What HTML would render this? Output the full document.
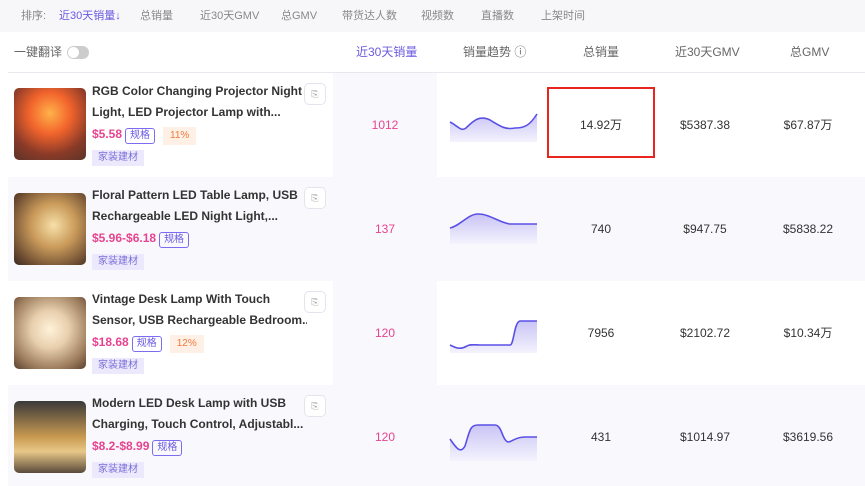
<!DOCTYPE html>
<html><head><meta charset="utf-8"><style>
*{margin:0;padding:0;box-sizing:border-box}
body{width:865px;height:486px;overflow:hidden;background:#fff;font-family:"Liberation Sans","Noto Sans CJK SC",sans-serif;position:relative;color:#333}
.a{position:absolute}
.sort{left:0;top:0;width:865px;height:32px;background:#f7f7fa;font-size:11px;color:#888}
.sort span{position:absolute;top:9px;line-height:14px}
.hd{font-size:12px;color:#666;top:44px;line-height:16px}
.row{left:8px;width:857px;height:104px}
.img{width:72px;height:72px;border-radius:5px;left:14px}
.t{left:92px;font-size:12px;font-weight:bold;color:#333;line-height:21px;width:215px;white-space:nowrap;overflow:hidden}
.p{font-size:12px;font-weight:bold;color:#e8438f}
.tag{display:inline-block;border:1px solid #7b6cf0;color:#6a5ae0;font-size:10px;border-radius:3px;padding:0 4px;line-height:14px;margin-left:3px;font-weight:normal}
.pct{display:inline-block;background:#fff0e6;color:#f07a3c;font-size:10px;padding:0 7px;line-height:18px;margin-left:8px;font-weight:normal}
.cat{left:92px;background:#ebe9fb;color:#7a6fd8;font-size:10px;padding:0 6px;line-height:16px}
.tr{left:304px;width:22px;height:22px;border:1px solid #e4e4ee;border-radius:5px;background:#fff;font-size:9px;color:#999;text-align:center;line-height:20px}
.n{font-size:12px;color:#333;text-align:center;line-height:16px;height:16px;white-space:nowrap}
.pk{color:#e8438f}
</style></head><body>
<div class="a sort"><span style="left:21px">排序:</span><span style="left:59px;color:#6a5ae0">近30天销量↓</span><span style="left:140px">总销量</span><span style="left:200px">近30天GMV</span><span style="left:281px">总GMV</span><span style="left:342px">带货达人数</span><span style="left:421px">视频数</span><span style="left:481px">直播数</span><span style="left:541px">上架时间</span></div>
<div class="a hd" style="left:14px">一键翻译</div>
<div class="a" style="left:67px;top:46px;width:22px;height:13px;border-radius:7px;background:#ccc"><div style="position:absolute;left:1px;top:1px;width:11px;height:11px;border-radius:50%;background:#fff"></div></div>
<div class="a hd" style="left:356px;color:#6a5ae0">近30天销量</div>
<div class="a hd" style="left:463px">销量趋势 ⓘ</div>
<div class="a hd" style="left:583px">总销量</div>
<div class="a hd" style="left:675px">近30天GMV</div>
<div class="a hd" style="left:790px">总GMV</div>
<div class="a" style="left:8px;top:72px;width:857px;height:1px;background:#e8e8ee"></div>

<div class="a row" style="top:73px;background:#fff"></div>
<div class="a" style="left:333px;top:73px;width:104px;height:104px;background:#f9f9fd"></div>
<div class="a row" style="top:177px;background:#f9f9fd"></div>
<div class="a row" style="top:281px;background:#fff"></div>
<div class="a" style="left:333px;top:281px;width:104px;height:104px;background:#f9f9fd"></div>
<div class="a row" style="top:385px;background:#f9f9fd;height:101px"></div>

<svg class="a" style="left:0;top:0" width="865" height="486">
<defs><linearGradient id="g" x1="0" y1="0" x2="0" y2="1"><stop offset="0" stop-color="#c9c4f5"/><stop offset="1" stop-color="#f4f3fd"/></linearGradient></defs>
<path d="M450 122 C458 126,461 132,466 128 C474 120,480 115,490 120 C500 126,505 130,515 128 C525 128,530 125,537 114 L537 142 L450 142Z" fill="url(#g)"/>
<path d="M450 122 C458 126,461 132,466 128 C474 120,480 115,490 120 C500 126,505 130,515 128 C525 128,530 125,537 114" fill="none" stroke="#5b50e6" stroke-width="1.6"/>
<path d="M450 228 C460 226,468 214,478 214 C490 214,500 223,510 224 L537 224 L537 244 L450 244Z" fill="url(#g)"/>
<path d="M450 228 C460 226,468 214,478 214 C490 214,500 223,510 224 L537 224" fill="none" stroke="#5b50e6" stroke-width="1.6"/>
<path d="M450 345 C456 348,460 350,467 346 C470 344,474 345,480 345 L510 345 C514 345,514 322,520 321 L537 321 L537 353 L450 353Z" fill="url(#g)"/>
<path d="M450 345 C456 348,460 350,467 346 C470 344,474 345,480 345 L510 345 C514 345,514 322,520 321 L537 321" fill="none" stroke="#5b50e6" stroke-width="1.6"/>
<path d="M450 439 C455 446,460 455,465 446 C470 430,470 425,478 425 L495 425 C502 425,502 440,508 442 C512 442,515 437,525 437 L537 437 L537 461 L450 461Z" fill="url(#g)"/>
<path d="M450 439 C455 446,460 455,465 446 C470 430,470 425,478 425 L495 425 C502 425,502 440,508 442 C512 442,515 437,525 437 L537 437" fill="none" stroke="#5b50e6" stroke-width="1.6"/>
<rect x="548" y="88" width="106" height="69" fill="none" stroke="#e8261f" stroke-width="2"/>
</svg>

<div class="a img" style="top:88px;background:radial-gradient(circle at 50% 35%,#ffb24a 0,#f2642c 35%,#8a3a28 70%,#5a3428 100%)"></div>
<div class="a t" style="top:81px">RGB Color Changing Projector Night<br>Light, LED Projector Lamp with...</div>
<div class="a" style="left:92px;top:125px"><span class="p">$5.58</span><span class="tag">规格</span><span class="pct">11%</span></div>
<div class="a cat" style="top:150px">家装建材</div>
<div class="a tr" style="top:83px">⎘</div>
<div class="a n pk" style="left:333px;width:104px;top:117px">1012</div>
<div class="a n" style="left:548px;width:106px;top:117px">14.92万</div>
<div class="a n" style="left:655px;width:100px;top:117px">$5387.38</div>
<div class="a n" style="left:758px;width:100px;top:117px">$67.87万</div>

<div class="a img" style="top:193px;background:radial-gradient(circle at 55% 45%,#f7e0a8 0,#c99a5a 40%,#6a4a30 80%,#3a2a20 100%)"></div>
<div class="a t" style="top:185px">Floral Pattern LED Table Lamp, USB<br>Rechargeable LED Night Light,...</div>
<div class="a" style="left:92px;top:229px"><span class="p">$5.96-$6.18</span><span class="tag">规格</span></div>
<div class="a cat" style="top:254px">家装建材</div>
<div class="a tr" style="top:187px">⎘</div>
<div class="a n pk" style="left:333px;width:104px;top:221px">137</div>
<div class="a n" style="left:548px;width:106px;top:221px">740</div>
<div class="a n" style="left:655px;width:100px;top:221px">$947.75</div>
<div class="a n" style="left:758px;width:100px;top:221px">$5838.22</div>

<div class="a img" style="top:297px;background:radial-gradient(circle at 50% 45%,#fff2d8 0,#e8cfae 35%,#9a7a5a 75%,#5a4030 100%)"></div>
<div class="a t" style="top:289px">Vintage Desk Lamp With Touch<br>Sensor, USB Rechargeable Bedroom...</div>
<div class="a" style="left:92px;top:333px"><span class="p">$18.68</span><span class="tag">规格</span><span class="pct">12%</span></div>
<div class="a cat" style="top:358px">家装建材</div>
<div class="a tr" style="top:291px">⎘</div>
<div class="a n pk" style="left:333px;width:104px;top:325px">120</div>
<div class="a n" style="left:548px;width:106px;top:325px">7956</div>
<div class="a n" style="left:655px;width:100px;top:325px">$2102.72</div>
<div class="a n" style="left:758px;width:100px;top:325px">$10.34万</div>

<div class="a img" style="top:401px;background:linear-gradient(180deg,#3a3a3a 0,#c89a50 50%,#e8c888 70%,#5a4a3a 100%)"></div>
<div class="a t" style="top:393px">Modern LED Desk Lamp with USB<br>Charging, Touch Control, Adjustabl...</div>
<div class="a" style="left:92px;top:437px"><span class="p">$8.2-$8.99</span><span class="tag">规格</span></div>
<div class="a cat" style="top:462px">家装建材</div>
<div class="a tr" style="top:395px">⎘</div>
<div class="a n pk" style="left:333px;width:104px;top:429px">120</div>
<div class="a n" style="left:548px;width:106px;top:429px">431</div>
<div class="a n" style="left:655px;width:100px;top:429px">$1014.97</div>
<div class="a n" style="left:758px;width:100px;top:429px">$3619.56</div>
</body></html>
